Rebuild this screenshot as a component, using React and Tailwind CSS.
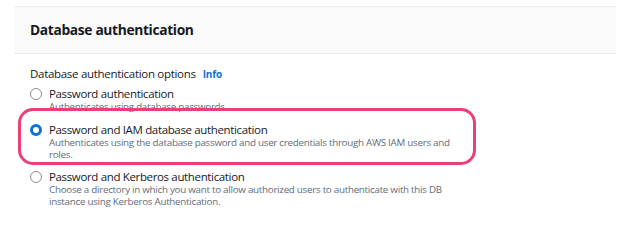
import React from "react";

const OPTIONS = [
  {
    id: "password",
    label: "Password authentication",
    desc: "Authenticates using database passwords",
  },
  {
    id: "iam",
    label: "Password and IAM database authentication",
    desc: "Authenticates using the database password and user credentials through AWS IAM users and roles.",
  },
  {
    id: "kerberos",
    label: "Password and Kerberos authentication",
    desc: "Choose a directory in which you want to allow authorized users to authenticate with this DB instance using Kerberos Authentication.",
  },
];

function Radio({ checked }) {
  return checked ? (
    <span className="mt-[1px] block h-[12px] w-[12px] shrink-0 rounded-full border-[3.5px] border-[#0972d3] bg-white" />
  ) : (
    <span className="mt-[1px] block h-[12px] w-[12px] shrink-0 rounded-full border border-[#8c8c94] bg-white" />
  );
}

export default function App() {
  const selected = "iam";

  return (
    <div
      className="relative h-[250px] w-[629px] overflow-hidden bg-white text-[#16191f]"
      style={{ fontFamily: '"Open Sans", "Noto Sans", Arial, sans-serif' }}
    >
      <div className="ml-[14px] mr-[13px] pt-[6px]">
        {/* header */}
        <div className="flex h-[48px] items-center border-y border-[#e9ebed] bg-[#fafafa] px-4">
          <h2 className="text-[13.8px] font-bold tracking-[-0.35px] text-[#16191f]">
            Database authentication
          </h2>
        </div>

        {/* body */}
        <div className="px-4 pt-[12px]">
          <div className="flex items-center gap-[7px] text-[11.5px] leading-[16px] tracking-[-0.3px]">
            <span>Database authentication options</span>
            <span className="text-[10px] font-bold tracking-[-0.1px] text-[#0972d3]">Info</span>
          </div>

          <div className="mt-[4px] flex flex-col">
            {OPTIONS.map((o, i) => (
              <div
                key={o.id}
                className={`flex gap-[7px] ${i === 1 ? "mt-[8px]" : ""} ${i === 2 ? "mt-[7px]" : ""}`}
              >
                <div className="pt-[1px]">
                  <Radio checked={o.id === selected} />
                </div>
                <div className="w-[402px]">
                  <div className="text-[11.5px] leading-[15px] tracking-[-0.35px]">{o.label}</div>
                  <div className="text-[9.8px] leading-[12.5px] tracking-[-0.27px] text-[#5f6b7a]">
                    {o.desc}
                  </div>
                </div>
              </div>
            ))}
          </div>
        </div>
      </div>

      {/* highlight annotation */}
      <div className="pointer-events-none absolute left-[18px] top-[108px] h-[57px] w-[458px] rounded-[15px] border-[3px] border-[#ec3f77]" />
    </div>
  );
}
